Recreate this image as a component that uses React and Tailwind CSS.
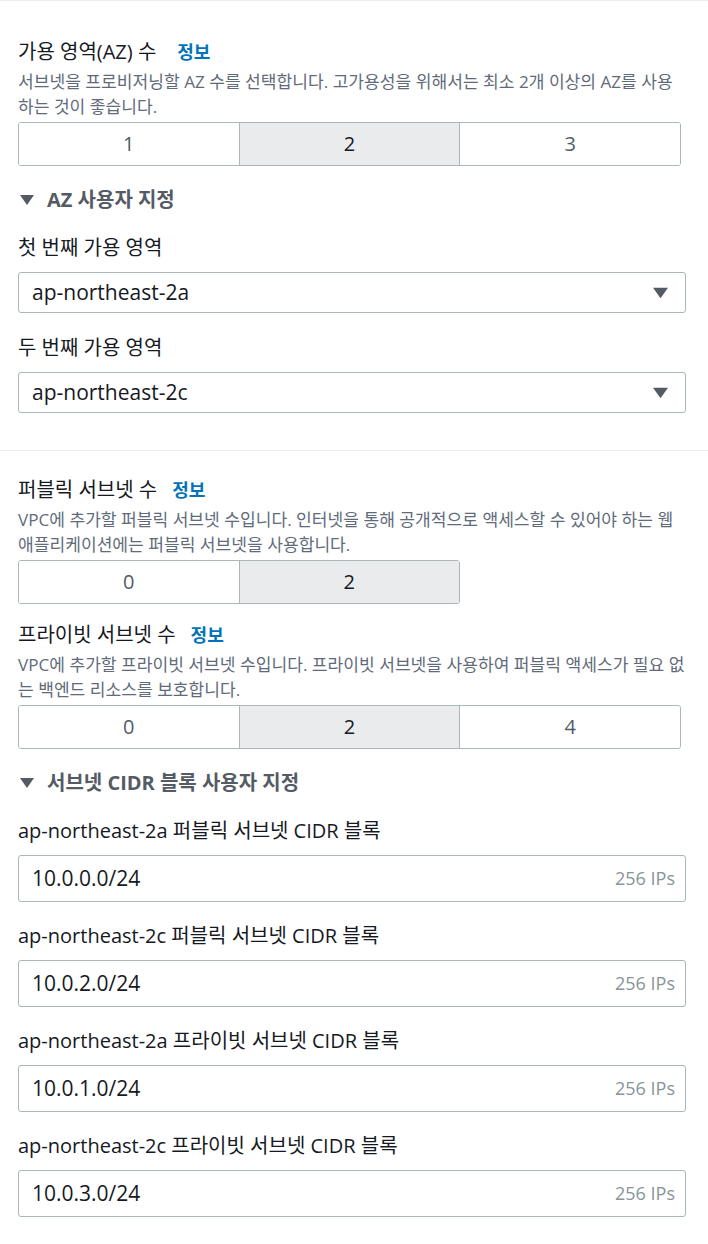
import React from 'react';

const font = { fontFamily: '"Open Sans", "Noto Sans CJK KR", sans-serif' };

function Caret({ className = '' }) {
  return (
    <svg width="14" height="10" viewBox="0 0 14 10" className={className}>
      <path d="M0 0 H14 L7 10 Z" fill="#545b64" />
    </svg>
  );
}

function FieldTitle({ children, gap = 'gap-[15px]' }) {
  return (
    <div className={`flex items-baseline h-[24px] ${gap}`}>
      <span className="text-[20px] leading-[24px] text-[#16191f]">{children}</span>
      <span className="text-[18px] leading-[24px] font-bold text-[#0073bb]">정보</span>
    </div>
  );
}

function Description({ children }) {
  return <p className="mt-[5px] text-[17.1px] leading-[25px] text-[#5f6b7a]">{children}</p>;
}

function Segments({ options, selected, width }) {
  return (
    <div className={`mt-[3px] flex h-[44px] ${width} border border-[#aab7b8] rounded-[3px] overflow-hidden divide-x divide-[#aab7b8]`}>
      {options.map((o) => (
        <div
          key={o}
          className={`flex-1 flex items-center justify-center text-[20px] ${
            o === selected ? 'bg-[#e9ebed] text-[#16191f]' : 'bg-white text-[#545b64]'
          }`}
        >
          {o}
        </div>
      ))}
    </div>
  );
}

function Expander({ children }) {
  return (
    <div className="mt-[22px] flex items-center gap-[13px] h-[24px] pl-[2px]">
      <Caret />
      <span className="text-[20px] font-bold text-[#545b64]">{children}</span>
    </div>
  );
}

function SelectField({ label, value, first }) {
  return (
    <div className={first ? 'mt-[24px]' : 'mt-[23px]'}>
      <div className="text-[20px] leading-[24px] text-[#16191f]">{label}</div>
      <div className="mt-[12px] h-[41px] flex items-center justify-between border border-[#aab7b8] rounded-[3px] pl-[13px] pr-[17px]">
        <span className="text-[21px] text-[#16191f]">{value}</span>
        <Caret className="w-[15px] h-[12px]" />
      </div>
    </div>
  );
}

function CidrField({ label, value, first }) {
  return (
    <div className={first ? 'mt-[24px]' : 'mt-[22px]'}>
      <div className="text-[20px] leading-[24px] text-[#16191f]">{label}</div>
      <div className="mt-[12px] h-[47px] flex items-center justify-between border border-[#aab7b8] rounded-[3px] pl-[13px] pr-[10px]">
        <span className="text-[21px] text-[#16191f]">{value}</span>
        <span className="text-[18px] text-[#879596]">256 IPs</span>
      </div>
    </div>
  );
}

export default function App() {
  return (
    <div className="min-h-screen bg-white border-t border-[#eaeded]" style={font}>
      <div className="pl-[18px] pr-[22px] pt-[39px]">
        <FieldTitle gap="gap-[21px]">가용 영역(AZ) 수</FieldTitle>
        <Description>
          서브넷을 프로비저닝할 AZ 수를 선택합니다. 고가용성을 위해서는 최소 2개 이상의 AZ를 사용하는 것이 좋습니다.
        </Description>
        <Segments options={['1', '2', '3']} selected="2" width="w-[663px]" />

        <Expander>AZ 사용자 지정</Expander>
        <SelectField label="첫 번째 가용 영역" value="ap-northeast-2a" first />
        <SelectField label="두 번째 가용 영역" value="ap-northeast-2c" />
      </div>

      <div className="mt-[37px] border-t border-[#eaeded]" />

      <div className="pl-[18px] pr-[22px] pt-[27px] pb-[28px]">
        <FieldTitle>퍼블릭 서브넷 수</FieldTitle>
        <Description>
          VPC에 추가할 퍼블릭 서브넷 수입니다. 인터넷을 통해 공개적으로 액세스할 수 있어야 하는 웹 애플리케이션에는 퍼블릭 서브넷을 사용합니다.
        </Description>
        <Segments options={['0', '2']} selected="2" width="w-[442px]" />

        <div className="mt-[19px]">
          <FieldTitle>프라이빗 서브넷 수</FieldTitle>
        </div>
        <Description>
          VPC에 추가할 프라이빗 서브넷 수입니다. 프라이빗 서브넷을 사용하여 퍼블릭 액세스가 필요 없는 백엔드 리소스를 보호합니다.
        </Description>
        <Segments options={['0', '2', '4']} selected="2" width="w-[663px]" />

        <Expander>서브넷 CIDR 블록 사용자 지정</Expander>
        <CidrField label="ap-northeast-2a 퍼블릭 서브넷 CIDR 블록" value="10.0.0.0/24" first />
        <CidrField label="ap-northeast-2c 퍼블릭 서브넷 CIDR 블록" value="10.0.2.0/24" />
        <CidrField label="ap-northeast-2a 프라이빗 서브넷 CIDR 블록" value="10.0.1.0/24" />
        <CidrField label="ap-northeast-2c 프라이빗 서브넷 CIDR 블록" value="10.0.3.0/24" />
      </div>
    </div>
  );
}
